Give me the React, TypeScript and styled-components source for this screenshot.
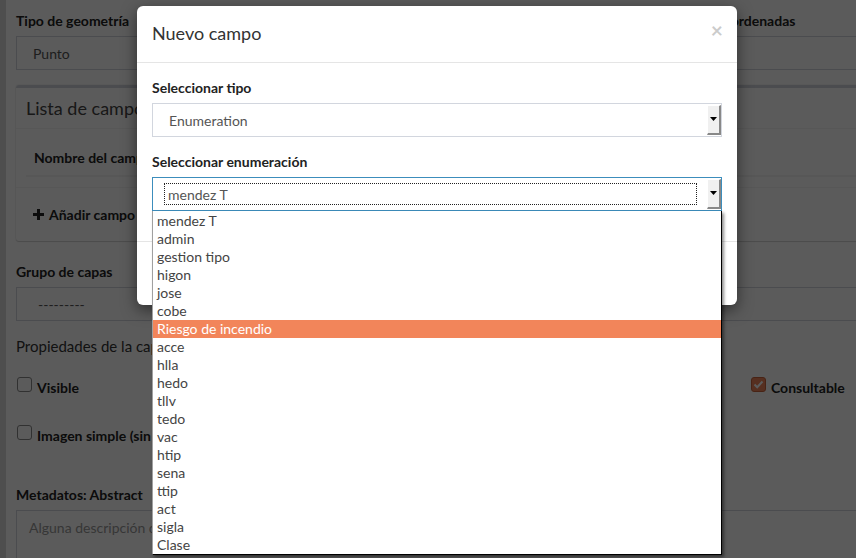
import * as React from "react";
import styled, { createGlobalStyle } from "styled-components";

const GlobalStyle = createGlobalStyle`
    html, body {
        margin: 0;
        padding: 0;
        height: 100%;
        overflow: hidden;
    }
    body {
        background: #dadada;
        font-family: Lato, "Liberation Sans", sans-serif;
        font-size: 14px;
        color: #333;
    }
`;

const enumeraciones = [
    "mendez T",
    "admin",
    "gestion tipo",
    "higon",
    "jose",
    "cobe",
    "Riesgo de incendio",
    "acce",
    "hlla",
    "hedo",
    "tllv",
    "tedo",
    "vac",
    "htip",
    "sena",
    "ttip",
    "act",
    "sigla",
    "Clase",
];

/* ---------- background page ---------- */

const Screen = styled.div`
    position: relative;
    height: 558px;
    overflow: hidden;
`;

const Content = styled.div`
    margin-left: 6px;
    height: 100%;
    background: #fff;
    padding: 11px 0 0 10px;
    width: 900px;
    box-sizing: border-box;
`;

const FormRow = styled.div<{ $cols?: string }>`
    display: grid;
    grid-template-columns: ${({ $cols }) => $cols || "1fr 1fr"};
    column-gap: 30px;
    width: 880px;
`;

const FormGroup = styled.div<{ $mb?: number }>`
    margin-bottom: ${({ $mb }) => ($mb === undefined ? 15 : $mb)}px;
`;

const Label = styled.div<{ $mt?: number }>`
    font-weight: 700;
    font-size: 14px;
    line-height: 20px;
    color: #222;
    margin-top: ${({ $mt }) => $mt || 0}px;
    margin-bottom: 5px;
    white-space: nowrap;
`;

const Input = styled.div<{ $indent?: number }>`
    height: 34px;
    box-sizing: border-box;
    border: 1px solid #d2d6de;
    padding: 0 ${({ $indent }) => $indent || 16}px;
    display: flex;
    align-items: center;
    color: #555;
    font-size: 14px;
`;

const Box = styled.div`
    width: 880px;
    border-top: 3px solid #d2d6de;
    border-radius: 3px;
    box-shadow: 0 1px 1px rgba(0, 0, 0, 0.15), 0 0 0 1px rgba(0, 0, 0, 0.04);
    margin-bottom: 21px;
`;

const BoxHeader = styled.div`
    height: 41px;
    box-sizing: border-box;
    padding: 0 10px;
    display: flex;
    align-items: center;
    border-bottom: 1px solid #f4f4f4;
    font-size: 18px;
    color: #444;
`;

const BoxBody = styled.div`
    padding: 10px;
`;

const Th = styled.div`
    height: 36px;
    padding: 0 8px;
    display: flex;
    align-items: center;
    font-weight: 700;
    color: #222;
    border-bottom: 2px solid #f4f4f4;
`;

const BoxFooter = styled.div`
    height: 53px;
    padding: 0 17px;
    display: flex;
    align-items: center;
    border-top: 1px solid #f4f4f4;
`;

const AddButton = styled.div`
    display: flex;
    align-items: center;
    gap: 5px;
    font-weight: 700;
    color: #222;
`;

const Plain = styled.div`
    font-size: 15px;
    line-height: 20px;
    color: #333;
    margin-bottom: 20px;
`;

const CheckRow = styled.div<{ $cols?: string }>`
    display: grid;
    grid-template-columns: ${({ $cols }) => $cols || "1fr"};
    width: 880px;
    margin-bottom: 28px;
`;

const Check = styled.div`
    display: flex;
    align-items: flex-end;
    gap: 5px;
    height: 20px;
    font-weight: 700;
    color: #222;
    white-space: nowrap;
`;

const CheckBoxIcon = styled.span<{ $checked?: boolean }>`
    width: 15px;
    height: 15px;
    box-sizing: border-box;
    border-radius: 3px;
    margin-left: 1px;
    margin-bottom: 4px;
    border: 1px solid ${({ $checked }) => ($checked ? "#c9643c" : "#8a8a8a")};
    background: ${({ $checked }) => ($checked ? "#f0855a" : "#fff")};
    display: flex;
    align-items: center;
    justify-content: center;
`;

const TextArea = styled.div`
    width: 880px;
    height: 80px;
    box-sizing: border-box;
    border: 1px solid #d2d6de;
    padding: 8px 12px;
    color: #999;
    font-size: 14px;
`;

const Backdrop = styled.div`
    position: absolute;
    inset: 0;
    background: rgba(0, 0, 0, 0.643);
`;

/* ---------- modal ---------- */

const Modal = styled.div`
    position: absolute;
    left: 137px;
    top: 6px;
    width: 600px;
    background: #fff;
    border-radius: 6px;
    box-shadow: 0 5px 15px rgba(0, 0, 0, 0.5);
`;

const ModalHeader = styled.div`
    height: 57px;
    box-sizing: border-box;
    padding: 0 15px;
    display: flex;
    align-items: center;
    justify-content: space-between;
    border-bottom: 1px solid #e5e5e5;
`;

const ModalTitle = styled.div`
    font-size: 18px;
    color: #333;
    margin-top: -2px;
`;

const Close = styled.div`
    font-size: 21px;
    font-weight: 700;
    color: #000;
    opacity: 0.2;
    margin-top: -9px;
    margin-right: -1px;
`;

const ModalBody = styled.div`
    padding: 15px;
`;

const ModalFooter = styled.div`
    height: 64px;
    box-sizing: border-box;
    padding: 0 15px;
    display: flex;
    align-items: center;
    justify-content: flex-end;
    gap: 5px;
    border-top: 1px solid #e5e5e5;
`;

const Btn = styled.div<{ $primary?: boolean }>`
    height: 34px;
    padding: 0 12px;
    display: flex;
    align-items: center;
    border-radius: 3px;
    border: 1px solid ${({ $primary }) => ($primary ? "#367fa9" : "#ddd")};
    background: ${({ $primary }) => ($primary ? "#3c8dbc" : "#f4f4f4")};
    color: ${({ $primary }) => ($primary ? "#fff" : "#444")};
`;

const SelectWrap = styled.div`
    position: relative;
`;

const Select = styled.div<{ $focused?: boolean }>`
    height: 34px;
    box-sizing: border-box;
    border: 1px solid ${({ $focused }) => ($focused ? "#3c8dbc" : "#d2d6de")};
    padding: 1px 0;
    display: flex;
    align-items: stretch;
    color: #555;
`;

const SelectValue = styled.div<{ $focused?: boolean }>`
    flex: 1;
    display: flex;
    align-items: center;
    ${({ $focused }) =>
        $focused
            ? `
        margin: 5px 11px 5px 12px;
        outline: 1px dotted #222;
        padding-left: 3px;
    `
            : `
        padding-left: 16px;
    `}
`;

const ArrowButton = styled.div`
    width: 14px;
    box-sizing: border-box;
    background: #f0f0f0;
    border-top: 1px solid #fff;
    border-left: 1px solid #fff;
    border-right: 2px solid #888;
    border-bottom: 2px solid #888;
    display: flex;
    align-items: center;
    justify-content: center;
`;

const DropList = styled.div`
    position: absolute;
    left: 0;
    right: 0;
    top: 100%;
    padding-top: 1px;
    background: #fff;
    border: 1px solid #000;
    border-left-color: #a0a0a0;
    border-top: none;
    box-shadow: 2px 2px 3px rgba(0, 0, 0, 0.45);
    z-index: 2;
`;

const DropItem = styled.div<{ $active?: boolean }>`
    height: 18px;
    line-height: 18px;
    padding-left: 4px;
    font-size: 14px;
    color: ${({ $active }) => ($active ? "#fff" : "#444")};
    background: ${({ $active }) => ($active ? "#f2855a" : "transparent")};
    white-space: nowrap;
`;

const Arrow = () => (
    <svg width="7" height="5" viewBox="0 0 7 5">
        <polygon points="0,0 7,0 3.5,4" fill="#000" />
    </svg>
);

const PlusIcon = () => (
    <svg width="11" height="11" viewBox="0 0 11 11">
        <rect x="4" y="0" width="3" height="11" fill="#222" />
        <rect x="0" y="4" width="11" height="3" fill="#222" />
    </svg>
);

const Tick = () => (
    <svg width="11" height="9" viewBox="0 0 11 9">
        <polyline points="1.5,4.5 4.2,7.2 9.5,1.5" fill="none" stroke="#fff" strokeWidth="2" />
    </svg>
);

const App = () => {
    const activeIdx = 6;

    return (
        <Screen>
            <GlobalStyle />
            <Content>
                <FormRow $cols="599px 1fr">
                    <FormGroup>
                        <Label>Tipo de geometría</Label>
                        <Input>Punto</Input>
                    </FormGroup>
                    <FormGroup>
                        <Label>Sistema de coordenadas</Label>
                        <Input>EPSG:4326</Input>
                    </FormGroup>
                </FormRow>

                <Box>
                    <BoxHeader>Lista de campos</BoxHeader>
                    <BoxBody>
                        <Th>Nombre del campo</Th>
                    </BoxBody>
                    <BoxFooter>
                        <AddButton>
                            <PlusIcon />
                            Añadir campo
                        </AddButton>
                    </BoxFooter>
                </Box>

                <FormRow>
                    <FormGroup>
                        <Label>Grupo de capas</Label>
                        <Input $indent={21}>---------</Input>
                    </FormGroup>
                    <FormGroup>
                        <Label>Orden</Label>
                        <Input>0</Input>
                    </FormGroup>
                </FormRow>

                <Plain>Propiedades de la capa</Plain>

                <CheckRow $cols="734px 1fr">
                    <Check>
                        <CheckBoxIcon />
                        Visible
                    </Check>
                    <Check>
                        <CheckBoxIcon $checked>
                            <Tick />
                        </CheckBoxIcon>
                        Consultable
                    </Check>
                </CheckRow>

                <CheckRow>
                    <Check>
                        <CheckBoxIcon />
                        Imagen simple (sin teselas)
                    </Check>
                </CheckRow>

                <FormGroup>
                    <Label $mt={41}>Metadatos: Abstract</Label>
                    <TextArea>Alguna descripción de la capa</TextArea>
                </FormGroup>
            </Content>

            <Backdrop />

            <Modal>
                <ModalHeader>
                    <ModalTitle>Nuevo campo</ModalTitle>
                    <Close>×</Close>
                </ModalHeader>
                <ModalBody>
                    <FormGroup>
                        <Label>Seleccionar tipo</Label>
                        <Select>
                            <SelectValue>Enumeration</SelectValue>
                            <ArrowButton>
                                <Arrow />
                            </ArrowButton>
                        </Select>
                    </FormGroup>
                    <FormGroup>
                        <Label>Seleccionar enumeración</Label>
                        <SelectWrap>
                            <Select $focused>
                                <SelectValue $focused>mendez T</SelectValue>
                                <ArrowButton>
                                    <Arrow />
                                </ArrowButton>
                            </Select>
                            <DropList>
                                {enumeraciones.map((name, idx) => (
                                    <DropItem key={name} $active={idx === activeIdx}>
                                        {name}
                                    </DropItem>
                                ))}
                            </DropList>
                        </SelectWrap>
                    </FormGroup>
                </ModalBody>
                <ModalFooter>
                    <Btn>Cancelar</Btn>
                    <Btn $primary>Aceptar</Btn>
                </ModalFooter>
            </Modal>
        </Screen>
    );
};

export default App;
